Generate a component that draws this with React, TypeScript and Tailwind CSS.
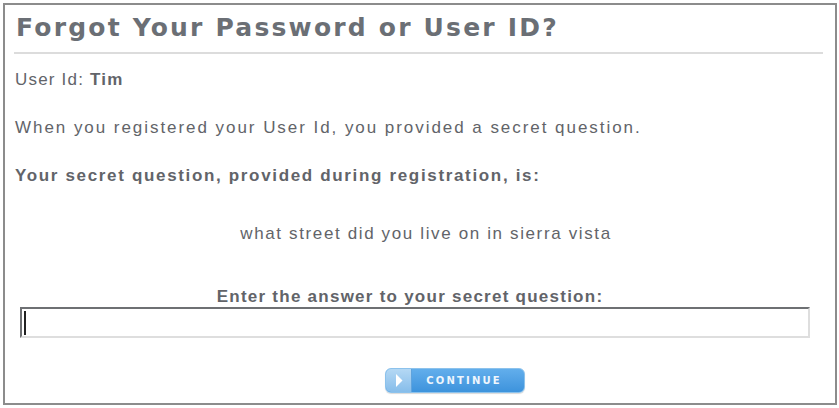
export default function App() {
  return (
    <div className="w-[839px] h-[408px] bg-white pt-[3px] pl-[3px]">
      <div
        className="w-[834px] h-[402px] border-2 border-[#8c8c8c] flex flex-col text-[#626469]"
        style={{ fontFamily: '"Liberation Sans", Arial, sans-serif' }}
      >
        <div className="px-[9px] pt-[8px]">
          <h1
            className="text-[25px] leading-[30px] font-bold text-[#6b6f75] tracking-[2.2px] pl-[2px]"
            style={{ fontFamily: '"DejaVu Sans", Verdana, sans-serif' }}
          >
            Forgot Your Password or User ID?
          </h1>
          <div className="mt-[9px] mr-[3px] h-[2px] bg-[#dcdcdc]" />
        </div>

        <div className="px-[10px] text-[17px]">
          <p className="mt-[16px] leading-[20px] tracking-[1.2px]">
            User Id: <span className="font-bold">Tim</span>
          </p>
          <p className="mt-[28px] leading-[20px] tracking-[1.95px]">
            When you registered your User Id, you provided a secret question.
          </p>
          <p className="mt-[28px] leading-[20px] font-bold tracking-[1.66px]">
            Your secret question, provided during registration, is:
          </p>
          <p className="mt-[38px] leading-[20px] text-center pl-[12px] tracking-[1.63px]">
            what street did you live on in sierra vista
          </p>
          <p className="mt-[43px] leading-[20px] font-bold text-center pr-[20px] tracking-[1.25px]">
            Enter the answer to your secret question:
          </p>
        </div>

        <div className="px-[15px]">
          <div className="w-[790px] h-[31px] border-t-2 border-l-2 border-t-[#6e7073] border-l-[#6e7073] border-r-2 border-b-2 border-r-[#dedede] border-b-[#dedede] flex items-center pl-[2px]">
            <div className="w-[2px] h-[24px] bg-[#222]" />
          </div>
        </div>

        <div className="flex justify-center mt-[30px] pl-[70px]">
          <button className="w-[140px] h-[25px] rounded-[6px] border border-[#8cc2ec] bg-gradient-to-b from-[#62aeec] to-[#3d93dc] flex items-stretch overflow-hidden shadow-[0_1px_1px_rgba(0,0,0,0.15)]">
            <span className="w-[26px] bg-gradient-to-b from-[#b4d8f4] to-[#86bdea] border-r border-[#5fa3dd] flex items-center justify-center">
              <svg width="8" height="13" viewBox="0 0 8 13">
                <path d="M1 0 L7.5 6.5 L1 13 Z" fill="#ffffff" />
              </svg>
            </span>
            <span
              className="flex-1 flex items-center justify-center pr-[8px] text-[10px] font-bold tracking-[2.2px] text-[#eef6fd]"
              style={{ fontFamily: '"DejaVu Sans", Verdana, sans-serif' }}
            >
              CONTINUE
            </span>
          </button>
        </div>
      </div>
    </div>
  );
}
